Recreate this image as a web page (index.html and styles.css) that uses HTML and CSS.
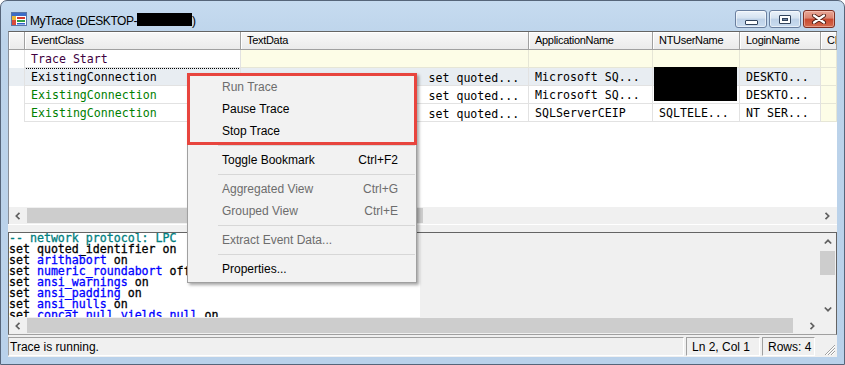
FILE: index.html
```html
<!DOCTYPE html>
<html>
<head>
<meta charset="utf-8">
<link rel="stylesheet" href="styles.css">
</head>
<body>
<div class="window">
  <div class="titlebar">
    <svg class="appicon" width="16" height="16" viewBox="0 0 16 16">
      <rect x="0.5" y="1.5" width="15" height="13" fill="#ffffff" stroke="#5a76a6"/>
      <rect x="1" y="2" width="14" height="3" fill="#3c6cc6"/>
      <rect x="1" y="5" width="4" height="4" fill="#e8b838"/>
      <rect x="1" y="9" width="4" height="5" fill="#d84a3a"/>
      <rect x="6" y="6" width="8" height="2" fill="#d23a2e"/>
      <rect x="6" y="9" width="8" height="2" fill="#2f9e44"/>
      <rect x="6" y="12" width="8" height="1.5" fill="#2f5fd0"/>
    </svg>
    <div class="title">MyTrace (DESKTOP-<span class="redact-title"></span>)</div>
    <div class="captions">
      <div class="cbtn"><span class="glyph-min"></span></div>
      <div class="cbtn"><span class="glyph-max"></span></div>
      <div class="cbtn close">
        <svg width="16" height="10" viewBox="0 0 16 10">
          <path d="M3 1.5 L13 8.5 M13 1.5 L3 8.5" stroke="#4a1a12" stroke-width="4" stroke-linecap="round"/>
          <path d="M3 1.5 L13 8.5 M13 1.5 L3 8.5" stroke="#ffffff" stroke-width="2.2" stroke-linecap="round"/>
        </svg>
      </div>
    </div>
  </div>

  <div class="client">
    <div class="grid">
      <div class="cols ghead">
        <div></div>
        <div>EventClass</div>
        <div>TextData</div>
        <div>ApplicationName</div>
        <div>NTUserName</div>
        <div>LoginName</div>
        <div>CPU</div>
      </div>
      <div class="gbody">
        <div class="cols row">
          <div class="strip"></div>
          <div class="c ts">Trace Start</div>
          <div class="c td y"></div>
          <div class="c y"></div>
          <div class="c y"></div>
          <div class="c y"></div>
          <div class="c y"></div>
        </div>
        <div class="cols row sel">
          <div class="strip"></div>
          <div class="c focus">ExistingConnection</div>
          <div class="c td">-- network protocol: LPC  set quoted...</div>
          <div class="c">Microsoft SQ...</div>
          <div class="c"></div>
          <div class="c">DESKTO...</div>
          <div class="c y"></div>
        </div>
        <div class="cols row">
          <div class="strip"></div>
          <div class="c grn">ExistingConnection</div>
          <div class="c td">-- network protocol: LPC  set quoted...</div>
          <div class="c">Microsoft SQ...</div>
          <div class="c"></div>
          <div class="c">DESKTO...</div>
          <div class="c y"></div>
        </div>
        <div class="cols row">
          <div class="strip"></div>
          <div class="c grn">ExistingConnection</div>
          <div class="c td">-- network protocol: LPC  set quoted...</div>
          <div class="c">SQLServerCEIP</div>
          <div class="c">SQLTELE...</div>
          <div class="c">NT SER...</div>
          <div class="c y"></div>
        </div>
      </div>
      <div class="hscroll grid-hs">
        <div class="sbtn"><svg width="8" height="8" viewBox="0 0 8 8"><path d="M5.5 0.8 L2.3 4 L5.5 7.2" fill="none" stroke="#606060" stroke-width="1.7"/></svg></div>
        <div class="track"><div class="thumb thumb-grid"></div></div>
        <div class="sbtn"><svg width="8" height="8" viewBox="0 0 8 8"><path d="M2.5 0.8 L5.7 4 L2.5 7.2" fill="none" stroke="#606060" stroke-width="1.7"/></svg></div>
      </div>
    </div>

    <div class="splitter"></div>

    <div class="textpane">
      <div class="tp-main">
        <div class="tp-text"><div class="cm">-- network protocol: LPC</div><div>set quoted_identifier on</div><div>set <span class="kw">arithabort</span> on</div><div>set <span class="kw">numeric_roundabort</span> off</div><div>set <span class="kw">ansi_warnings</span> on</div><div>set <span class="kw">ansi_padding</span> on</div><div>set <span class="kw">ansi_nulls</span> on</div><div>set <span class="kw">concat_null_yields_null</span> on</div></div>
        <div class="vscroll">
          <div class="sbtn"><svg width="8" height="8" viewBox="0 0 8 8"><path d="M0.8 5.5 L4 2.3 L7.2 5.5" fill="none" stroke="#606060" stroke-width="1.7"/></svg></div>
          <div class="vtrack"><div class="vthumb"></div></div>
          <div class="sbtn"><svg width="8" height="8" viewBox="0 0 8 8"><path d="M0.8 2.5 L4 5.7 L7.2 2.5" fill="none" stroke="#606060" stroke-width="1.7"/></svg></div>
        </div>
      </div>
      <div class="tp-bottom">
        <div class="hscroll tp-hs">
          <div class="sbtn"><svg width="8" height="8" viewBox="0 0 8 8"><path d="M5.5 0.8 L2.3 4 L5.5 7.2" fill="none" stroke="#606060" stroke-width="1.7"/></svg></div>
          <div class="track"><div class="thumb thumb-tp"></div></div>
          <div class="sbtn"><svg width="8" height="8" viewBox="0 0 8 8"><path d="M2.5 0.8 L5.7 4 L2.5 7.2" fill="none" stroke="#606060" stroke-width="1.7"/></svg></div>
        </div>
        <div class="corner"></div>
      </div>
    </div>

    <div class="statusbar">
      <div class="panel p1">Trace is running.</div>
      <div class="panel p2">Ln 2, Col 1</div>
      <div class="panel p3">Rows: 4</div>
      <div class="grip">
        <svg width="12" height="12" viewBox="0 0 12 12">
          <path d="M11 2 L2 11 M11 5 L5 11 M11 8 L8 11" stroke="#ffffff" stroke-width="1"/>
          <path d="M11 1 L1 11 M11 4 L4 11 M11 7 L7 11" stroke="#a0a0a0" stroke-width="1"/>
        </svg>
      </div>
    </div>
  </div>

  <div class="redact-grid"></div>

  <div class="ctxmenu">
    <div class="mi dis"><span>Run Trace</span></div>
    <div class="mi"><span>Pause Trace</span></div>
    <div class="mi"><span>Stop Trace</span></div>
    <div class="sep"></div>
    <div class="mi"><span>Toggle Bookmark</span><span class="sc">Ctrl+F2</span></div>
    <div class="sep"></div>
    <div class="mi dis"><span>Aggregated View</span><span class="sc">Ctrl+G</span></div>
    <div class="mi dis"><span>Grouped View</span><span class="sc">Ctrl+E</span></div>
    <div class="sep"></div>
    <div class="mi dis"><span>Extract Event Data...</span></div>
    <div class="sep"></div>
    <div class="mi"><span>Properties...</span></div>
  </div>
  <div class="redbox"></div>
</div>
</body>
</html>
```
FILE: styles.css
```css
* { box-sizing: border-box; }
html, body { margin: 0; padding: 0; }
body {
  width: 845px;
  height: 365px;
  overflow: hidden;
  background: #ffffff;
  font-family: "Liberation Sans", Arial, sans-serif;
}

.window {
  position: relative;
  width: 845px;
  height: 365px;
  border: 1px solid #56657a;
  border-radius: 7px 7px 0 0;
  background: linear-gradient(#c6dbf0, #bcd3ea 40px, #b9d1ea);
  padding: 0 7px 7px 7px;
  display: flex;
  flex-direction: column;
}

/* title bar */
.titlebar {
  height: 30px;
  flex: none;
  display: flex;
  align-items: flex-start;
}
.appicon { flex: none; margin: 10px 0 0 3px; }
.title {
  margin: 12px 0 0 3px;
  font-size: 12px;
  line-height: 14px;
  letter-spacing: -0.45px;
  color: #000;
  white-space: nowrap;
}
.redact-title {
  display: inline-block;
  width: 55px;
  height: 13px;
  background: #000;
  vertical-align: -1px;
}
.captions {
  margin: 9px 2px 0 auto;
  display: flex;
  gap: 2px;
}
.cbtn {
  width: 32px;
  height: 18px;
  border: 1px solid #6a7f9f;
  border-radius: 3px;
  background: linear-gradient(#ebf2fa, #d5e2f0 45%, #bdd0e7 50%, #cadcf0);
  box-shadow: inset 0 0 0 1px rgba(255,255,255,0.55);
  display: flex;
  align-items: center;
  justify-content: center;
}
.cbtn.close {
  border-color: #7e2f23;
  background: linear-gradient(#eaa797, #da8471 45%, #c8482f 50%, #d46c50);
  box-shadow: inset 0 0 0 1px rgba(255,220,210,0.45);
}
.glyph-min {
  width: 13px;
  height: 5px;
  margin-top: 6px;
  background: #fff;
  border: 1px solid #33445c;
  border-radius: 1px;
}
.glyph-max {
  width: 12px;
  height: 9px;
  border: 1px solid #33445c;
  background: #6f84a3;
  box-shadow: inset 0 0 0 2px #ffffff, inset 0 0 0 3px #33445c;
  border-radius: 1px;
}

/* client */
.client {
  flex: 1;
  min-height: 0;
  display: flex;
  flex-direction: column;
  background: #f0f0f0;
}

.grid {
  height: 193px;
  flex: none;
  border-top: 1px solid #646464;
  border-left: 1px solid #8a8f98;
  background: #fff;
  display: flex;
  flex-direction: column;
  overflow: hidden;
}
.cols {
  display: grid;
  grid-template-columns: 16px 216px 288px 124px 87px 81px 1fr;
}
.ghead {
  height: 18px;
  flex: none;
  background: linear-gradient(#f8f8f8, #eaeaea);
}
.ghead > div {
  border-right: 1px solid #a0a0a0;
  border-bottom: 1px solid #a0a0a0;
  box-shadow: inset 1px 1px 0 #ffffff;
  font-size: 11px;
  letter-spacing: -0.3px;
  line-height: 17px;
  padding-left: 6px;
  white-space: nowrap;
  overflow: hidden;
  color: #000;
}
.gbody {
  flex: 1;
  background: #fff;
}
.row { height: 18px; }
.row > div {
  height: 18px;
  overflow: hidden;
}
.strip {
  border-right: 1px solid #e2e2e2;
}
.c {
  border-right: 1px solid #e2e2e2;
  border-bottom: 1px solid #e2e2e2;
  padding: 1px 0 0 6px;
  font-family: "DejaVu Sans Mono", "Liberation Mono", monospace;
  font-size: 11.6px;
  line-height: 17px;
  white-space: pre;
  color: #000;
}
.c.td { padding-top: 2px; }
.c.y { background: #fdfde7; border-right-color: #e6e6d6; border-bottom-color: #e6e6d6; }
.c.ts { color: #400040; }
.c.grn { color: #008000; }
.row.sel > div { background-color: #e8edf2; }
.row.sel > div.y { background-color: #fdfde7; }
.c.focus { position: relative; }
.c.focus::after {
  content: "";
  position: absolute;
  left: -1px; top: 0; right: -1px; bottom: -1px;
  border: 1px dotted #000;
}

/* scrollbars */
.hscroll {
  height: 17px;
  flex: none;
  display: flex;
  background: #f0f0f0;
}
.grid-hs { padding-right: 2px; }
.sbtn {
  width: 17px;
  height: 17px;
  flex: none;
  display: flex;
  align-items: center;
  justify-content: center;
}
.track {
  flex: 1;
  display: flex;
}
.thumb {
  background: #cdcdcd;
  margin: 1px 0 1px 1px;
}
.thumb-grid { width: 396px; }
.thumb-tp { width: 766px; }

.splitter {
  height: 8px;
  flex: none;
  border-top: 1px solid #ffffff;
  background: #f0f0f0;
}

.textpane {
  height: 103px;
  flex: none;
  border: 1px solid #646464;
  border-bottom-color: #a0a0a0;
  display: flex;
  flex-direction: column;
}
.tp-main {
  height: 84px;
  flex: none;
  display: flex;
}
.tp-text {
  flex: 1;
  overflow: hidden;
  background: linear-gradient(to right, #ffffff 0 411px, #f0f0f0 411px);
  font-family: "DejaVu Sans Mono", "Liberation Mono", monospace;
  font-size: 11.6px;
  line-height: 11px;
  white-space: pre;
  color: #000;
  -webkit-text-stroke: 0.3px currentColor;
}
.tp-text .cm { color: #008080; }
.tp-text .kw { color: #0000ff; }
.vscroll {
  width: 16px;
  flex: none;
  display: flex;
  flex-direction: column;
  background: #f0f0f0;
}
.vscroll .sbtn { width: 16px; }
.vtrack { flex: 1; }
.vthumb {
  margin: 1px 1px 0 0;
  height: 24px;
  background: #cdcdcd;
}
.tp-bottom {
  height: 17px;
  flex: none;
  display: flex;
}
.tp-hs { flex: 1; }
.corner { width: 16px; background: #f0f0f0; }

/* status bar */
.statusbar {
  flex: 1;
  display: flex;
  gap: 2px;
  padding-top: 2px;
  font-size: 12px;
  color: #000;
}
.panel {
  height: 19px;
  border: 1px solid;
  border-color: #a0a0a0 #ffffff #ffffff #a0a0a0;
  line-height: 18px;
  white-space: nowrap;
  overflow: hidden;
}
.p1 { flex: 1; padding-left: 1px; }
.p2 { width: 74px; flex: none; padding-left: 5px; }
.p3 { width: 53px; flex: none; padding-left: 5px; }
.grip {
  width: 20px;
  flex: none;
  display: flex;
  align-items: flex-end;
  justify-content: flex-end;
  padding: 0 1px 1px 0;
}

/* overlays */
.redact-grid {
  position: absolute;
  left: 653px;
  top: 66px;
  width: 83px;
  height: 34px;
  background: #000;
}
.ctxmenu {
  position: absolute;
  left: 186px;
  top: 72px;
  width: 230px;
  height: 210px;
  background: #f2f2f2;
  border: 1px solid #a0a0a0;
  box-shadow: 2px 2px 3px rgba(0,0,0,0.35);
  padding: 2px 0;
  font-family: "Liberation Sans", Arial, sans-serif;
  font-size: 12px;
  color: #000;
}
.mi {
  height: 22px;
  line-height: 22px;
  display: flex;
  padding: 0 18px 0 34px;
  white-space: nowrap;
}
.mi .sc { margin-left: auto; }
.mi.dis { color: #6d6d6d; }
.sep {
  height: 7px;
  padding-top: 3px;
  margin: 0 1px 0 30px;
}
.sep::before {
  content: "";
  display: block;
  height: 1px;
  background: #d7d7d7;
}
.redbox {
  position: absolute;
  left: 186px;
  top: 72px;
  width: 230px;
  height: 72px;
  border: 3px solid #e8453e;
}
```
